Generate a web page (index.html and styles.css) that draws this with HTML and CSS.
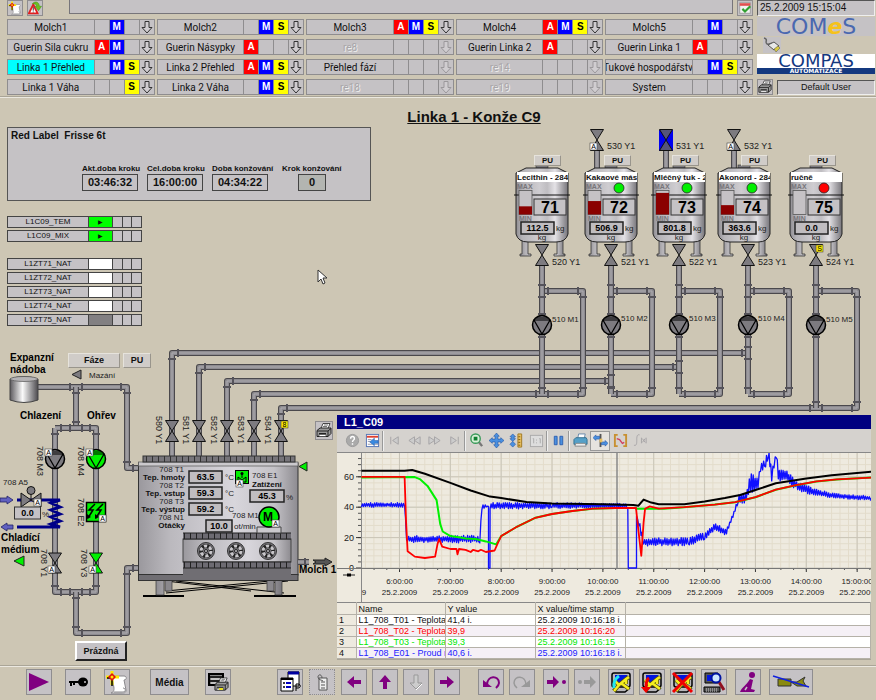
FILE: index.html
```html
<!DOCTYPE html>
<html lang="cs">

<head>
    <meta charset="UTF-8">
    <meta name="viewport" content="width=device-width, initial-scale=1.0">
    <title>Linka 1 - Konže C9</title>
    <link rel="stylesheet" href="styles.css">
</head>

<body>
    <svg class="defs" aria-hidden="true">
        <defs>
            <linearGradient id="steel">
                <stop offset="0" stop-color="#8f8d92" />
                <stop offset="0.12" stop-color="#b5b3b7" />
                <stop offset="0.45" stop-color="#cfcdd1" />
                <stop offset="0.6" stop-color="#bfbdc1" />
                <stop offset="0.75" stop-color="#e4e2e6" />
                <stop offset="1" stop-color="#77757a" />
            </linearGradient>
            <linearGradient id="drum">
                <stop offset="0" stop-color="#5c5a5e" />
                <stop offset="0.45" stop-color="#fafafa" />
                <stop offset="1" stop-color="#4c4a4e" />
            </linearGradient>
            <linearGradient id="vessel">
                <stop offset="0" stop-color="#9a989d" />
                <stop offset="0.2" stop-color="#bbb9be" />
                <stop offset="0.6" stop-color="#d8d6dc" />
                <stop offset="0.85" stop-color="#c4c2c7" />
                <stop offset="1" stop-color="#8d8b90" />
            </linearGradient>
        </defs>
        <symbol id="i-down" viewBox="0 0 14 14">
            <path d="M5 1.500h4v6h3L7 13 2 7.500h3z" fill="#d0cdd0" stroke="currentColor" />
        </symbol>
        <symbol id="i-print" viewBox="0 0 16 16">
            <path d="M5 6l2-5h7l-2 5z" fill="#fff" stroke="#222" stroke-width=".8" />
            <path d="M1 8l3-2.500h11V11l-3 3H1z" fill="#9a9a9a" stroke="#222" />
            <path d="M1 8.500h11V14M12 8.500L15 6M3 11h7" fill="none" stroke="#222" />
            <path d="M3 12h7v2H3z" fill="#fff" stroke="#222" stroke-width=".6" />
            <path d="M8 2.500h4M7 4h4" stroke="#777" />
        </symbol>
        <symbol id="i-new" viewBox="0 0 24 24">
            <path d="M7 6h12c3 0 3 4 0 4l2 10c0 3-2 3-4 3H6c3-1 3-3 3-5z" fill="#fff" stroke="#8a888c" />
            <path d="M9 22h9c3 0 3-4 0-4" fill="none" stroke="#8a888c" />
            <path d="M7 1v14M1 7h13" stroke="#ffea00" stroke-width="3" />
            <path d="M7 9v7M2 8h4" stroke="#000" stroke-width="1.500" />
            <path d="M7 3l4 4-4 4-4-4z" fill="#e01010" />
            <circle cx="7" cy="7" r="1.500" fill="#ffea00" />
        </symbol>
        <symbol id="i-screen" viewBox="0 0 24 24">
            <rect x="3" y="3" width="18" height="14" rx="2" fill="#b9b7bb" stroke="#000" stroke-width="1.500" />
            <rect x="6" y="5" width="12" height="8" fill="#0014e0" />
            <path d="M4 19l3 3h9l5-4" fill="#b9b7bb" stroke="#000" stroke-width="1.500" />
            <path d="M5 10l5 5-5 6M10 15l7-6 3-2M12 13l8 6M17 9v5" fill="none" stroke="#55500a" stroke-width="4" />
            <path d="M5 10l5 5-5 6M10 15l7-6 3-2M12 13l8 6M17 9v5" fill="none" stroke="#f5ee20" stroke-width="2.500" />
        </symbol>
    </svg>

    <header class="topbar">
        <div class="topbar-main">
            <div class="message-row">
                <button class="mini" aria-label="Nový"><svg><use href="#i-new" /></svg></button>
                <button class="mini" aria-label="Alarmy">
                    <svg viewBox="0 0 16 16">
                        <path d="M6 4l5 10H1z" fill="#fff" stroke="#e02020" stroke-width="2" />
                        <path d="M6 7v4M6 12v1" stroke="#222" />
                        <path d="M5 3c4-4 8-1 8 3h2.500L12 11 8 6h2c0-2-2-3-5-3z" fill="#6cc020" stroke="#3a8a10" stroke-width=".5" />
                    </svg>
                </button>
                <div class="message"></div>
                <button class="mini" aria-label="Kvitovat">
                    <svg viewBox="0 0 16 16">
                        <rect x="2" y="2" width="12" height="12" fill="#f2f2f2" stroke="#999" />
                        <path d="M2 4h12" stroke="#e05050" stroke-width="3" />
                        <path d="M5 9l3 3 6-6" fill="none" stroke="#30a030" stroke-width="2.500" />
                    </svg>
                </button>
            </div>
            <nav class="screens" id="screens"></nav>
        </div>

        <div class="brand">
            <div class="clock">25.2.2009 15:15:04</div>
            <div class="logo-comes">COM<em>e</em>S</div>
            <svg class="plug" viewBox="0 0 18 16">
                <path d="M1 1c5 1 0 5 3 6s4-2 6 0" fill="none" stroke="#666" stroke-width="1.500" />
                <path d="M5 8l6-3 5 4-5 4z" fill="#e8e8e8" stroke="#555" />
                <path d="M11 12l4-3 2 2-4 4z" fill="#d8c840" stroke="#555" stroke-width=".5" />
            </svg>
            <div class="logo-compas">
                <div class="logo-name">COMPAS</div>
                <div class="logo-sub">AUTOMATIZACE</div>
            </div>
            <div class="user-row">
                <button class="mini" aria-label="Tisk"><svg><use href="#i-print" /></svg></button>
                <div class="user">Default User</div>
            </div>
        </div>
    </header>

    <main class="process">
        <svg class="diagram" id="diagram" viewBox="0 98 876 567" width="876" height="567"></svg>

        <h1>Linka 1 - Konže C9</h1>

        <section class="recipe">
            <h2>Red Label&nbsp; Frisse 6t</h2>
            <div class="fields">
                <div class="field"><label for="stepTime">Akt.doba kroku</label><output id="stepTime">03:46:32</output></div>
                <div class="field"><label for="totalTime">Cel.doba kroku</label><output id="totalTime">16:00:00</output></div>
                <div class="field"><label for="concheTime">Doba konžování</label><output id="concheTime">04:34:22</output></div>
                <div class="field step"><label for="step">Krok konžování</label><output id="step">0</output></div>
            </div>
        </section>

        <table class="phases">
            <tbody>
                <tr><td class="phase">L1C09_TEM</td><td class="state run">▶</td><td></td><td></td><td></td></tr>
                <tr><td class="phase">L1C09_MIX</td><td class="state run">▶</td><td></td><td></td><td></td></tr>
            </tbody>
        </table>
        <table class="phases natural">
            <tbody>
                <tr><td class="phase">L1ZT71_NAT</td><td class="state idle"></td><td></td><td></td><td></td></tr>
                <tr><td class="phase">L1ZT72_NAT</td><td class="state idle"></td><td></td><td></td><td></td></tr>
                <tr><td class="phase">L1ZT73_NAT</td><td class="state idle"></td><td></td><td></td><td></td></tr>
                <tr><td class="phase">L1ZT74_NAT</td><td class="state idle"></td><td></td><td></td><td></td></tr>
                <tr><td class="phase">L1ZT75_NAT</td><td class="state off"></td><td></td><td></td><td></td></tr>
            </tbody>
        </table>

        <button class="flat phase-btn">Fáze</button>
        <button class="flat phase-pu">PU</button>
        <button class="empty-btn">Prázdná</button>
        <button class="mini print-btn" aria-label="Tisk"><svg><use href="#i-print" /></svg></button>

        <section class="trend">
            <h2>L1_C09</h2>
            <div class="trend-tools">
                <button disabled aria-label="Help"><svg viewBox="0 0 16 16"><circle cx="8" cy="8" r="6.500" fill="#aaa" stroke="#999" /><path d="M6 6c0-3 4-3 4 0 0 1.500-2 1.500-2 3.500M8 11v1.500" fill="none" stroke="#fff" stroke-width="1.500" /></svg></button>
                <button aria-label="Config"><svg viewBox="0 0 16 16"><rect x="1.500" y="1.500" width="13" height="13" fill="#fff" stroke="#5575b5" /><path d="M2 4h12" stroke="#e04030" stroke-width="2" /><path d="M3 7h4M3 9h3M3 12h5M10 12h4" stroke="#99a" /><path d="M5 9.500l5-4v2.500h4v3h-4v2.500z" fill="#3a8ae0" stroke="#1a50a0" stroke-width=".5" /></svg></button>
                <i></i>
                <button disabled aria-label="First"><svg viewBox="0 0 16 16"><path d="M4 4v8M12 4L6 8l6 4z" fill="#ccc" stroke="#a5a3a5" /></svg></button>
                <button disabled aria-label="Back"><svg viewBox="0 0 16 16"><path d="M8 4L2 8l6 4zM14 4L8 8l6 4z" fill="#ccc" stroke="#a5a3a5" /></svg></button>
                <button disabled aria-label="Forward"><svg viewBox="0 0 16 16"><path d="M2 4l6 4-6 4zM8 4l6 4-6 4z" fill="#ccc" stroke="#a5a3a5" /></svg></button>
                <button disabled aria-label="Last"><svg viewBox="0 0 16 16"><path d="M12 4v8M4 4l6 4-6 4z" fill="#ccc" stroke="#a5a3a5" /></svg></button>
                <i></i>
                <button aria-label="Zoom"><svg viewBox="0 0 16 16"><path d="M10 9l4 5" stroke="#777" stroke-width="2.500" /><circle cx="7" cy="6" r="5" fill="#d8f0d8" stroke="#3a9a5a" stroke-width="1.500" /><path d="M5 4h4v4H5z" fill="#108030" /></svg></button>
                <button aria-label="Move"><svg viewBox="0 0 16 16"><path d="M8 0l3 3.500H9.500v3h3V5L16 8l-3.500 3V9.500h-3v3H11L8 16l-3-3.500h1.500v-3h-3V11L0 8l3.500-3v1.500h3v-3H5z" fill="#4a90e0" stroke="#2050a0" stroke-width=".6" /></svg></button>
                <button aria-label="Scale"><svg viewBox="0 0 16 16"><path d="M4 1l3 3H5.500v2H7L4 9 1 6h1.500V4H1zM4 9l3 3-3 3-3-3z" fill="#4a90e0" stroke="#2050a0" stroke-width=".6" /><path d="M9.500 1h4v14h-4z" fill="#e8c060" stroke="#a07820" /><path d="M10 4h2M10 7h2M10 10h2M10 13h2" stroke="#805a10" /></svg></button>
                <button disabled aria-label="One to one"><svg viewBox="0 0 16 16"><rect x="1.500" y="2.500" width="13" height="12" fill="#ddd" stroke="#aaa" /><path d="M4 6h1v5M11 6h1v5M8 7v1M8 10v1" fill="none" stroke="#aaa" /></svg></button>
                <i></i>
                <button aria-label="Pause"><svg viewBox="0 0 16 16"><path d="M3.500 3.500h3v9h-3zM9.500 3.500h3v9h-3z" fill="#4a90e0" stroke="#2f60b0" /></svg></button>
                <i></i>
                <button aria-label="Print"><svg viewBox="0 0 16 16"><path d="M5 6l1-5h7l-1 5z" fill="#fff" stroke="#68a" /><path d="M1 7l2-2h11l1 2v5H1z" fill="#55a0c8" stroke="#357090" /><path d="M3 11h10l1 3H2z" fill="#eee" stroke="#888" /></svg></button>
                <button class="pressed" aria-label="Ruler"><svg viewBox="0 0 16 16"><path d="M8 1v14" stroke="#555" stroke-width="2" /><path d="M0 5l3-3v1.500h4v3H3V8z" fill="#4a90e0" stroke="#2050a0" stroke-width=".6" /><path d="M16 11l-3-3v1.500H9v3h4V14z" fill="#4a90e0" stroke="#2050a0" stroke-width=".6" /><path d="M7 6h3v4H7z" fill="#e8c060" /></svg></button>
                <button aria-label="Range"><svg viewBox="0 0 16 16"><path d="M5 2H2v12h3M11 2h3v12h-3" fill="none" stroke="#c89030" stroke-width="2" /><path d="M4 6l3 1 3 4 2-1" fill="none" stroke="#d04060" stroke-width="1.500" /></svg></button>
                <button disabled aria-label="Function"><svg viewBox="0 0 16 16"><path d="M7 2c-3-1-3 3-3 6s0 6-3 5M9 5v6M14 5v6M10 6l3 4M13 6l-3 4" fill="none" stroke="#a5a3a5" /></svg></button>
            </div>
            <svg class="chart" id="chart" viewBox="337 453 534 149"></svg>
            <table class="trend-values">
                <thead>
                    <tr><th class="num"></th><th class="name">Name</th><th class="val">Y value</th><th class="stamp">X value/time stamp</th><th></th></tr>
                </thead>
                <tbody>
                    <tr><td>1</td><td>L1_708_T01 - Teplota</td><td>41,4 i.</td><td>25.2.2009 10:16:18 i.</td><td></td></tr>
                    <tr class="red"><td>2</td><td>L1_708_T02 - Teplota</td><td>39,9</td><td>25.2.2009 10:16:20</td><td></td></tr>
                    <tr class="green"><td>3</td><td>L1_708_T03 - Teplota</td><td>39,3</td><td>25.2.2009 10:16:15</td><td></td></tr>
                    <tr class="blue"><td>4</td><td>L1_708_E01 - Proud m</td><td>40,6 i.</td><td>25.2.2009 10:16:18 i.</td><td></td></tr>
                </tbody>
            </table>
        </section>
    </main>

    <footer class="toolbar">
        <div class="group wide">
            <button aria-label="Start"><svg viewBox="0 0 24 24"><path d="M2 3l20 9L2 21z" fill="#800080" /></svg></button>
            <button aria-label="Přihlášení"><svg viewBox="0 0 24 24"><path d="M3 12h11M5 12v4M8 12v3" stroke="#000" stroke-width="2" /><ellipse cx="17" cy="12" rx="5" ry="4.500" /><circle cx="19" cy="12" r="1" fill="#c5c2c5" /></svg></button>
            <button aria-label="Nový"><svg><use href="#i-new" /></svg></button>
        </div>
        <div class="group">
            <button class="media">Média</button>
        </div>
        <div class="group reports">
            <button aria-label="Tisk"><svg viewBox="0 0 24 24"><path d="M3 4h14v11H3z" fill="#888" stroke="#000" stroke-width="2" /><path d="M3 7h14M3 11h14" stroke="#000" stroke-width="1.500" /><path d="M5 9h9M5 13h5" stroke="#fff" /><use href="#i-print" x="8" y="7" width="15" height="15" /><path d="M13 18h4v2h-4z" fill="#e8e020" /></svg></button>
        </div>
        <div class="group six">
            <button aria-label="Vlastnosti"><svg viewBox="0 0 24 24"><path d="M10 2h11v14H10z" fill="#fff" stroke="#000" /><path d="M10 3h11" stroke="#0000a0" stroke-width="3" /><path d="M3 8h12v13H3z" fill="#fff" stroke="#000" /><path d="M3 9h12" stroke="#000" stroke-width="2" /><path d="M5 13h2M5 17h2" stroke="#000" stroke-width="1.500" /><path d="M8 13h5M8 17h5" stroke="#0000c0" stroke-width="2" /><path d="M18 21v-7h2c3 0 3 4 0 4h-2" fill="none" stroke="#000" /></svg></button>
            <button class="dotted" aria-label="Zámek"><svg viewBox="0 0 24 24"><path d="M9 8h8v12H9z" fill="#eee" stroke="#555" /><path d="M12 8c0-4-4-4-4-1s4 3 5 4M11 12h4M11 15h4M11 18h4" fill="none" stroke="#555" /></svg></button>
        </div>
        <div class="group arrows">
            <button aria-label="Vlevo"><svg viewBox="0 0 24 24"><path d="M5 12l7-6v4h7v4h-7v4z" fill="#800080" /></svg></button>
            <button aria-label="Nahoru"><svg viewBox="0 0 24 24"><path d="M12 5l6 7h-4v7h-4v-7H6z" fill="#800080" /></svg></button>
            <button disabled aria-label="Dolů"><svg viewBox="0 0 24 24"><path d="M10 5h4v8h4l-6 6-6-6h4z" fill="#ccc" stroke="#999" /><path d="M18 14l-6 6" stroke="#fff" /></svg></button>
            <button aria-label="Vpravo"><svg viewBox="0 0 24 24"><path d="M19 12l-7-6v4H5v4h7v4z" fill="#800080" /></svg></button>
        </div>
        <div class="group undo">
            <button aria-label="Zpět"><svg viewBox="0 0 24 24"><path d="M8 15C8 5 20 5 20 13c0 2-1 3-3 5" fill="none" stroke="#800080" stroke-width="2" /><path d="M4 10l9 7H4z" fill="#800080" /></svg></button>
            <button disabled aria-label="Znovu"><svg viewBox="0 0 24 24"><path d="M16 15C16 5 4 5 4 13c0 2 1 3 3 5" fill="none" stroke="#999" stroke-width="1.500" /><path d="M20 10l-9 7h9z" fill="#999" /></svg></button>
        </div>
        <div class="group">
            <button aria-label="Další"><svg viewBox="0 0 24 24"><path d="M15 12l-6-6v4H3v4h6v4z" fill="#800080" /><circle cx="20" cy="12" r="2" fill="#800080" /></svg></button>
            <button disabled aria-label="Předchozí"><svg viewBox="0 0 24 24"><path d="M21 12l-6-6v4H9v4h6v4z" fill="#999" /><circle cx="5" cy="12" r="2" fill="#999" /></svg></button>
        </div>
        <div class="group">
            <button aria-label="Nahrát obraz"><svg viewBox="0 0 24 24"><use href="#i-screen" /><path d="M5 18c-1-7 2-10 5-12" fill="none" stroke="#20e8f0" stroke-width="3" /></svg></button>
            <button aria-label="Uložit obraz"><svg viewBox="0 0 24 24"><use href="#i-screen" /><path d="M9 8c-3 2-3 6-3 10" fill="none" stroke="#f00000" stroke-width="3" /><path d="M1 17h10l-5 6z" fill="#f00000" /></svg></button>
            <button aria-label="Smazat obraz"><svg viewBox="0 0 24 24"><use href="#i-screen" /><path d="M2 3l19 19M21 3L2 22" stroke="#f00000" stroke-width="3" /></svg></button>
            <button aria-label="Hledat"><svg viewBox="0 0 24 24"><path d="M3 3h13v10H3zM2 17h16v5H2z" fill="#555" stroke="#000" /><path d="M5 5h9v6H5z" fill="#0014e0" /><path d="M4 19h12M4 21h12" stroke="#ccc" stroke-dasharray="1 1" /><path d="M17 12l5 8" stroke="#901020" stroke-width="3" /><circle cx="14" cy="8" r="4.500" fill="#cfe8ff" stroke="#0014a0" stroke-width="2" /></svg></button>
        </div>
        <div class="group info">
            <button aria-label="Informace"><svg viewBox="0 0 24 24"><circle cx="16" cy="5" r="3" fill="#800080" /><path d="M14 9l3 1-2 9 4 1-1 2H4c2-5 6-6 10-13z" fill="#800080" /><path d="M11 17l-2 3" stroke="#c5c2c5" stroke-width="1.500" /></svg></button>
        </div>
        <div class="group">
            <button class="horn" aria-label="Houkačka"><svg viewBox="0 0 42 24"><path d="M8 9h13v7H8z" fill="#8a8a10" stroke="#333" /><path d="M21 12h6l8-5-2 4 3 5H27z" fill="#8a8a10" stroke="#333" /><path d="M3 6l36 11" stroke="#1020e0" stroke-width="1.500" /></svg></button>
        </div>
    </footer>

    <script src="script.js"></script>
</body>

</html>
```
FILE: styles.css
```css
* {
    box-sizing: border-box;
}

body {
    margin: 0;
    min-height: 100vh;
    display: flex;
    flex-direction: column;
    background-color: #cdc6b4;
    font-family: "Liberation Sans", Arial, sans-serif;
    font-size: 10px;
    color: #111;
}

button {
    font-family: inherit;
    padding: 0;
    color: #111;
    background-color: #c5c2c5;
    border: 1px solid #8f8d8f;
}

.defs {
    position: absolute;
    width: 0;
    height: 0;
}

/* header */

.topbar {
    display: flex;
    gap: 4px;
    height: 98px;
    padding: 0 1px 0 7px;
    border-bottom: 1px solid #ebe8e0;
    box-shadow: inset 0 -1px 0 #aaa597;
}

.topbar-main {
    flex: 1;
    min-width: 0;
}

.message-row {
    display: flex;
    gap: 4px;
    height: 19px;
}

.message {
    flex: 1;
    height: 14px;
    margin-left: 22px;
    background-color: #c5c2c5;
    border: 1px solid #77757a;
    border-top: none;
}

.mini {
    width: 16px;
    height: 16px;
    display: flex;
}

.mini svg {
    width: 100%;
    height: 100%;
}

.screens {
    display: grid;
    grid-template-columns: repeat(5, 1fr);
    gap: 4px 2px;
}

.screen {
    display: flex;
    height: 16px;
    min-width: 0;
    border: 1px solid #8f8d8f;
    background-color: #c5c2c5;
}

.screen button {
    border: none;
    background: none;
}

.screen .name {
    flex: 1;
    min-width: 0;
    display: flex;
    justify-content: center;
    align-items: center;
    overflow: hidden;
    white-space: nowrap;
    font-family: Roboto, Arial, sans-serif;
    font-size: 10px;
}

.screen .name.active {
    background-color: #00ffff;
}

.screen .name:disabled {
    color: #a9a6a9;
    text-shadow: 1px 1px 0 #eee;
}

.flag {
    width: 15px;
    border-left: 1px solid #8f8d8f;
    text-align: center;
    font-weight: bold;
    font-size: 10px;
    line-height: 14px;
}

.flag.A {
    background-color: #ff0000;
    color: #fff;
}

.flag.M {
    background-color: #0000ff;
    color: #fff;
}

.flag.S {
    background-color: #ffff00;
    color: #000;
}

.screen .down {
    width: 15px;
    border-left: 1px solid #8f8d8f;
    color: #333;
}

.screen .down:disabled {
    color: #9b989b;
}

.down svg {
    display: block;
    width: 14px;
    height: 14px;
}

.brand {
    width: 118px;
    display: flex;
    flex-direction: column;
}

.clock,
.user {
    background-color: #c5c2c5;
    border: 1px solid #555;
    border-right-color: #eee;
    border-bottom-color: #eee;
}

.clock {
    height: 16px;
    padding-left: 2px;
    font-size: 10px;
    line-height: 13px;
}

.logo-comes {
    height: 19px;
    margin-top: 1px;
    background-color: #c5c2c5;
    color: #4a68b0;
    font-family: "DejaVu Sans", sans-serif;
    font-size: 22px;
    line-height: 20px;
    text-align: center;
}

.logo-comes em {
    color: #f5c21c;
    font-weight: bold;
}

.plug {
    width: 18px;
    height: 16px;
    margin: 1px 0 1px 6px;
    background-color: #c5c2c5;
}

.logo-compas {
    height: 20px;
    background-color: #fff;
    color: #14397f;
    font-family: "DejaVu Sans", sans-serif;
    text-align: center;
}

.logo-name {
    height: 14px;
    font-size: 18px;
    line-height: 14px;
}

.logo-sub {
    height: 6px;
    font-size: 6px;
    line-height: 6px;
    font-weight: bold;
    background-color: #14397f;
    color: #fff;
}

.user-row {
    display: flex;
    gap: 4px;
    margin-top: 5px;
}

.user {
    flex: 1;
    height: 15px;
    margin-top: 1px;
    font-size: 9px;
    line-height: 13px;
    text-align: center;
}

/* process picture */

.process {
    position: relative;
    flex: 1;
    min-height: 567px;
    padding: 9px 7px 0;
}

.diagram {
    position: absolute;
    left: 0;
    top: 0;
}

.diagram text {
    font-size: 9px;
    fill: #222;
}

.diagram .small {
    font-size: 8px;
}

.diagram .b {
    font-size: 8px;
    font-weight: bold;
    fill: #111;
}

.diagram .head {
    font-size: 10px;
    font-weight: bold;
    fill: #000;
}

.diagram .value {
    font-size: 9px;
    font-weight: bold;
    fill: #000;
    text-anchor: middle;
}

.diagram .tank-no {
    font-size: 16px;
    font-weight: bold;
    fill: #000;
    text-anchor: middle;
}

.diagram .limit {
    font-size: 7px;
    font-weight: bold;
    fill: #77757a;
}

.diagram .badge {
    font-size: 7px;
    text-anchor: middle;
    fill: #000;
}

.diagram .motor {
    font-size: 12px;
    font-weight: bold;
    text-anchor: middle;
    fill: #000;
}

.diagram .end {
    text-anchor: end;
}

.diagram .mid {
    text-anchor: middle;
}

.process h1 {
    position: relative;
    margin: 0;
    padding-left: 72px;
    font-size: 15px;
    line-height: 20px;
    text-align: center;
    text-decoration: underline;
}

.recipe {
    position: relative;
    width: 364px;
    height: 74px;
    padding: 3px;
    background-color: #c5c2c5;
    border: 1px solid #555;
}

.recipe h2 {
    margin: 0;
    font-size: 10px;
    line-height: 10px;
}

.fields {
    display: flex;
    gap: 5px;
    margin: 23px 0 0 71px;
}

.field {
    width: 60px;
    white-space: nowrap;
}

.field label {
    display: block;
    font-size: 8px;
    line-height: 10px;
    font-weight: bold;
}

.field output {
    display: block;
    width: 56px;
    height: 17px;
    border: 1px solid #444;
    font-size: 11px;
    line-height: 15px;
    font-weight: bold;
    text-align: center;
}

.field.step {
    margin-left: 5px;
}

.field.step output {
    width: 28px;
    margin: 0 auto;
    background-color: #b3b5b1;
}

.phases {
    position: relative;
    width: 135px;
    margin-top: 13px;
    table-layout: fixed;
    border-spacing: 0 2px;
}

.phases.natural {
    margin-top: 12px;
}

.phases td {
    height: 12px;
    padding: 0;
    background-color: #c5c2c5;
    border: 1px solid #444;
    border-left: none;
    font-size: 8px;
    line-height: 10px;
    text-align: center;
}

.phases .phase {
    width: 82px;
    border-left: 1px solid #444;
}

.phases .state {
    width: 24px;
    font-size: 6px;
}

.phases .run {
    background-color: #00ff00;
}

.phases .idle {
    background-color: #fff;
}

.phases .off {
    background-color: #828082;
}

.flat {
    position: absolute;
    width: 27px;
    height: 11px;
    background-color: #d0ccc8;
    border: 1px solid #e6e3dc;
    border-right-color: #99958c;
    border-bottom-color: #99958c;
    font-size: 8px;
    line-height: 9px;
    font-weight: bold;
}

.phase-btn,
.phase-pu {
    top: 255px;
    height: 15px;
    font-size: 9px;
}

.phase-btn {
    left: 68px;
    width: 52px;
}

.phase-pu {
    left: 123px;
    width: 28px;
}

.empty-btn {
    position: absolute;
    left: 75px;
    top: 543px;
    width: 52px;
    height: 20px;
    border: 2px solid #fff;
    border-right-color: #222;
    border-bottom-color: #222;
    font-size: 9px;
    font-weight: bold;
}

.print-btn {
    position: absolute;
    left: 315px;
    top: 323px;
    width: 18px;
    height: 19px;
}

/* trend window */

.trend {
    position: absolute;
    left: 337px;
    right: 5px;
    top: 317px;
    background-color: #eeeadf;
    border-bottom: 1px solid #aaa597;
}

.trend h2 {
    margin: 0;
    padding-left: 7px;
    height: 14px;
    background-color: #000080;
    color: #fff;
    font-size: 11px;
    line-height: 14px;
}

.trend-tools {
    display: flex;
    align-items: center;
    height: 24px;
    padding-left: 5px;
    background-color: #d5d2ce;
    border-bottom: 1px solid #888;
}

.trend-tools button {
    width: 20px;
    height: 20px;
    display: flex;
    justify-content: center;
    align-items: center;
    border: none;
    background: none;
}

.trend-tools .pressed {
    background-color: #e6e3df;
    border: 1px solid #999;
}

.trend-tools svg {
    width: 15px;
    height: 15px;
}

.trend-tools i {
    width: 2px;
    height: 20px;
    border-left: 1px solid #999;
    border-right: 1px solid #f0f0f0;
}

.chart {
    display: block;
    width: 100%;
}

.chart text {
    font-size: 8px;
    text-anchor: middle;
    fill: #222;
}

.chart .y {
    font-size: 9px;
    text-anchor: end;
}

.trend-values {
    width: 100%;
    table-layout: fixed;
    border-collapse: collapse;
    border-top: 1px solid #888;
    font-size: 9px;
    line-height: 10px;
}

.trend-values th,
.trend-values td {
    height: 12px;
    padding: 0 0 0 2px;
    overflow: hidden;
    white-space: nowrap;
    text-align: left;
    font-weight: normal;
    border: 1px solid #b5b1a8;
    border-width: 0 1px 1px 0;
}

.trend-values td {
    height: 11px;
    background-color: #fff;
}

.trend-values tr:nth-child(even) td {
    background-color: #f5f0f6;
}

.trend-values tbody td:first-child {
    background-color: #eeeadf;
    color: #111;
}

.trend-values .num {
    width: 19px;
}

.trend-values .name {
    width: 89px;
}

.trend-values .val,
.trend-values .stamp {
    width: 90px;
}

.trend-values .red {
    color: #ff0000;
}

.trend-values .green {
    color: #00e800;
}

.trend-values .blue {
    color: #2020ff;
}

/* bottom toolbar */

.toolbar {
    display: flex;
    height: 35px;
    padding: 3px 0 0 26px;
    border-top: 1px solid #aaa597;
    box-shadow: inset 0 1px 0 #ebe8e0;
}

.toolbar .group {
    display: flex;
    gap: 5px;
    margin-right: 8px;
}

.toolbar .wide {
    gap: 13px;
    margin-right: 20px;
}

.toolbar .reports {
    margin: 0 46px 0 8px;
}

.toolbar .six {
    gap: 6px;
    margin-right: 6px;
}

.toolbar .arrows {
    margin-right: 18px;
}

.toolbar button {
    width: 26px;
    height: 26px;
    display: flex;
    justify-content: center;
    align-items: center;
}

.toolbar svg {
    width: 100%;
    height: 100%;
}

.toolbar .media {
    width: 39px;
    font-size: 10px;
    font-weight: bold;
}

.toolbar .dotted {
    border-style: dotted;
}

.toolbar .horn {
    width: 44px;
}
```
FILE: script.js
```js
// screen menu: [name, flags, options]
const screens = [
    ['Molch1', ' M '], ['Molch2', ' MS'], ['Molch3', 'AMS'], ['Molch4', 'AMS'], ['Molch5', ' M '],
    ['Guerin Sila cukru', 'AM '], ['Guerin Násypky', 'A  '], ['re8', '   ', 'off'], ['Guerin Linka 2', 'A  '], ['Guerin Linka 1', 'A  '],
    ['Linka 1 Přehled', ' MS', 'active'], ['Linka 2 Přehled', 'AMS'], ['Přehled fází', '   ', 'noarrow'], ['re14', '   ', 'off'], ['Tukové hospodářství', ' MS'],
    ['Linka 1 Váha', '  S'], ['Linka 2 Váha', ' MS'], ['re18', '   ', 'off'], ['re19', '   ', 'off'], ['System', '   ']
];

document.getElementById('screens').innerHTML = screens.map(([name, flags, opt]) => `
    <div class="screen">
        <button class="name ${opt === 'active' ? 'active' : ''}" ${opt === 'off' ? 'disabled' : ''}>${name}</button>
        ${[...flags].map(f => `<span class="flag ${f.trim()}">${f.trim()}</span>`).join('')}
        <button class="down" aria-label="${name} dolů" ${opt === 'off' || opt === 'noarrow' ? 'disabled' : ''}><svg><use href="#i-down"/></svg></button>
    </div>`).join('');

// ---- process diagram ----
const GREY = '#7d7b80';
const GREEN = '#00f000';
let out = '';

function text(x, y, str, cls = '') {
    out += `<text x="${x}" y="${y}" class="${cls}">${str}</text>`;
}

function vtext(x, y, str) {
    out += `<text transform="translate(${x} ${y}) rotate(90)">${str}</text>`;
}

function pipe(...pts) {
    const p = pts.join(' ');
    out += `<g fill="none" stroke-linejoin="round">
        <polyline points="${p}" stroke="#4a484c" stroke-width="6"/>
        <polyline points="${p}" stroke="#8d8b90" stroke-width="4"/>
        <polyline points="${p}" stroke="#aeacb1" stroke-width="1"/></g>`;
}

// flange across a vertical (v) or horizontal (h) pipe
function flange(dir, x, y) {
    out += dir === 'v'
        ? `<rect x="${x - 4}" y="${y - 1}" width="8" height="2" fill="#55535a"/>`
        : `<rect x="${x - 1}" y="${y - 4}" width="2" height="8" fill="#55535a"/>`;
}

function valve(x, y, color = GREY, h = 10.5) {
    out += `<path d="M${x - 6.5} ${y - h}h13L${x - 6.5} ${y + h}h13z" fill="${color}" stroke="#111" stroke-linejoin="round"/>`;
}

function badge(x, y, letter = 'A', color = '#fff') {
    out += `<rect x="${x}" y="${y}" width="7" height="7" fill="${color}" stroke="#444" stroke-width=".6"/>`;
    text(x + 3.5, y + 6, letter, 'badge');
}

function pump(x, y, color = GREY) {
    out += `<circle cx="${x}" cy="${y}" r="9.500" fill="${color}" stroke="#000" stroke-width="1.500"/>
        <path d="M${x - 8} ${y - 5}h16L${x} ${y + 9}zM${x - 6} ${y - 7}h12" fill="none" stroke="#000" stroke-width="1.200"/>`;
}

function valueBox(x, y, w, str) {
    out += `<rect x="${x}" y="${y}" width="${w}" height="12" fill="#c0bdc0" stroke="#222" stroke-width="1.500"/>`;
    text(x + w / 2, y + 9, str, 'value');
}

const tanks = [
    { x: 516, cx: 542, no: 71, name: 'Lecithin - 28400', level: 0.34, kg: '112.5', pu: 534 },
    { x: 585, cx: 611, no: 72, name: 'Kakaové máslo', level: 0.56, kg: '506.9', pu: 604, lamp: GREEN, top: 597 },
    { x: 653, cx: 679, no: 73, name: 'Mléčný tuk - 28', level: 0.9, kg: '801.8', pu: 672, lamp: GREEN, top: 666 },
    { x: 718, cx: 748, no: 74, name: 'Akonord - 2840', level: 0.39, kg: '363.6', pu: 741, lamp: GREEN, top: 734 },
    { x: 790, cx: 816, no: 75, name: 'ručně', level: 0, kg: '0.0', pu: 809, lamp: '#ff0000' }
];

// feed lines to the conche, from the outer one to the inner one
pipe(172, 460, 172, 353, 748, 353);
pipe(199, 460, 199, 367, 679, 367);
pipe(227, 460, 227, 381, 611, 381);
pipe(254, 460, 254, 394, 583, 394);
pipe(281, 460, 281, 408, 858, 408);
[[172, 353], [199, 367], [227, 381], [254, 394], [281, 408]].forEach(([x, y], i) => {
    flange('h', x + 6, y);
    flange('v', x, y + 6);
    valve(x, 431);
    vtext(x - 16, 416, `58${i} Y1`);
});
badge(281, 421, '8', '#ffee00');

tanks.forEach((t, i) => {
    const bottom = i === 4 ? 408 : 394;
    const loop = t.cx + 41;
    pipe(t.cx, 291, loop, 291, loop, bottom, t.cx, bottom);
    pipe(t.cx, 264, t.cx, bottom);
    [285, 297, 314, 337].forEach(y => flange('v', t.cx, y));
    flange('v', t.cx, bottom - 6);
    flange('v', loop, 297);
    flange('v', loop, bottom - 6);
    flange('h', t.cx + 6, 291);
    flange('h', loop - 5, 291);
    flange('h', loop - 5, bottom);
    flange('h', t.cx + 6, bottom);
    if (i === 0 || i === 4) flange('h', t.cx - 6, bottom);
    pump(t.cx, 325);
    valve(t.cx, 255);
    text(t.cx + 10, 265, `52${i} Y1`);
    text(t.cx + 10, i === 0 || i === 4 ? 322 : 321, `510 M${i + 1}`, 'small');
});
[[748, 353], [679, 367], [611, 381]].forEach(([x, y]) => {
    flange('h', x - 6, y);
    flange('v', x, y - 6);
    flange('v', x, y + 6);
});

tanks.forEach((t, i) => {
    const x = t.x;
    if (t.top) {
        pipe(t.top, 150, t.top, 168);
        if (i === 2) out += `<rect x="${t.top - 7}" y="130" width="14" height="21" fill="#0000f0"/>`;
        valve(t.top, 140, i === 2 ? '#55537a' : GREY);
        if (i !== 2) badge(t.top - 7, 143);
        text(t.top + 10, 149, `53${i - 1} Y1`);
    }
    out += `<path d="M${x + 6} 240h6v14h3v2h-11v-2h2zM${x + 41} 240h6v14h2v2h-11v-2h3z" fill="url(#steel)" stroke="#333" stroke-width=".8"/>
        <rect x="${x + 20}" y="165" width="12" height="3" fill="${GREY}" stroke="#333" stroke-width=".6"/>
        <path d="M${x} 173l10-5h32l10 5v61q-2 8-12 8h-28q-10 0-12-8z" fill="url(#steel)" stroke="#222"/>
        <path d="M${x - 2} 195h56" stroke="#111"/>
        <rect x="${x + 1}" y="172" width="51" height="10" fill="#fff"/>
        <svg x="${x + 1}" y="172" width="51" height="10"><text x="0" y="8" class="b">${t.name}</text></svg>`;
    text(x + 1, 189, 'MAX', 'limit');
    text(x + 3, 221, 'MIN', 'limit');
    const h = 24 * t.level;
    out += `<rect x="${x + 3}" y="190.500" width="13" height="24" fill="#c5c2c5" stroke="#555" stroke-width=".8"/>
        <rect x="${x + 3}" y="${214.5 - h}" width="13" height="${h}" fill="#8a0000"/>
        <rect x="${x + 18}" y="199" width="32" height="16" fill="#c5c2c5" stroke="#333"/>`;
    text(x + 34, 213, t.no, 'tank-no');
    if (t.lamp) out += `<circle cx="${x + 34}" cy="188" r="5" fill="${t.lamp}" stroke="#222" stroke-width=".8"/>`;
    valueBox(x + 5, 222, 33, t.kg);
    text(x + 40, 231, 'kg', 'small');
    text(x + 26, 240, 'kg', 'small mid');
});
badge(816, 245, 'S', '#ffee00');

// heating and cooling loop
pipe(38, 387, 127, 387, 127, 468, 139, 468);
pipe(76, 387, 76, 428);
pipe(55, 428, 96, 428, 96, 592, 55, 592, 55, 428);
pipe(76, 592, 76, 633, 127, 633, 127, 568, 139, 568);
[[70, 387], [82, 387], [121, 387], [133, 468], [61, 428], [70, 428], [82, 428], [90, 428],
 [61, 592], [70, 592], [82, 592], [90, 592], [82, 633], [121, 633], [133, 568]].forEach(p => flange('h', ...p));
[[76, 393], [76, 422], [127, 393], [127, 462], [55, 434], [96, 434], [55, 586], [96, 586],
 [76, 598], [76, 627], [127, 627], [127, 574]].forEach(p => flange('v', ...p));

out += `<path d="M10 379q14-5 28 0v21q-14 5-28 0z" fill="url(#drum)" stroke="#444"/>
    <ellipse cx="24" cy="379" rx="13.500" ry="2.500" fill="#b5b3b5" stroke="#555" stroke-width=".7"/>
    <path d="M81 370v9l-9-4.500z" fill="${GREY}" stroke="#222"/>
    <path d="M24 556v10l-10-5z" fill="${GREEN}" stroke="#222"/>
    <path d="M17 500h43l-9 3 9 4-9 3 9 4-9 3 9 4-9 3 9 3H17" fill="none" stroke="#000088" stroke-width="3"/>
    <path d="M0 498h7v-2l6 4-6 4v-2H0zM13 525H7v-2l-6 4 6 4v-2h6z" fill="#6060c0" stroke="#222266" stroke-width=".8"/>
    <path d="M31 500V492" stroke="#111"/><circle cx="31" cy="490.500" r="4" fill="${GREY}" stroke="#111"/>
    <path d="M21 493v14l20-14v14z" fill="${GREY}" stroke="#111"/>
    <rect x="86.500" y="502.500" width="19" height="19" fill="${GREEN}" stroke="#000" stroke-width="1.500"/>
    <path d="M95 504l-6 6h4l-5 8M103 504l-6 6h4l-5 8" fill="none" stroke="#000" stroke-width="1.500"/>
    <path d="M87 519v-5l4 3zM95 519v-5l4 3z"/>
    <rect x="14.500" y="507" width="26" height="12" fill="#c5c2c5" stroke="#333"/>`;
text(27.5, 516, '0.0', 'value');
text(42, 517, '%', 'small');
badge(34, 499);
badge(99, 515);
pump(55, 459);
pump(96, 459, GREEN);
badge(45, 449);
badge(86, 449);
valve(55, 563, GREY, 10);
valve(96, 563, GREEN, 10);
badge(48, 566);
badge(89, 566);

text(10, 361, 'Expanzní', 'head');
text(10, 373, 'nádoba', 'head');
text(20, 419, 'Chlazení', 'head');
text(87, 419, 'Ohřev', 'head');
text(89, 378, 'Mazání', 'small');
text(3, 485, '708 A5', 'small');
text(1, 541, 'Chladící', 'head');
text(1, 553, 'médium', 'head');
vtext(37, 446, '708 M3');
vtext(78, 446, '708 M4');
vtext(78, 498, '708 E2');
vtext(41, 549, '708 Y1');
vtext(81, 549, '708 Y3');

// conche
out += `<g stroke="#000"><path d="M166 581l85 10M288 581l-122 12M176 581l108 12M270 581l-104 10"/>
    <path d="M143 596h41M254 596h42" stroke-width="2"/></g>
    <path d="M165 580h7v11h-7zM267 580h7v11h-7z" fill="#8a888c" stroke="#333" stroke-width=".7"/>
    <path d="M156 580h8v15h-8zM275 580h7v15h-7z" fill="url(#steel)" stroke="#333" stroke-width=".7"/>
    <rect x="138.500" y="463" width="159.500" height="112" fill="url(#vessel)" stroke="#333"/>
    <rect x="138.500" y="462" width="159.500" height="4" fill="#cbc9cd" stroke="#555" stroke-width=".7"/>
    <rect x="143" y="456" width="152" height="6" fill="#77757a" stroke="#333"/>
    <path d="M146 459h148" stroke="#333" stroke-width="6" stroke-dasharray="1 5"/>
    <rect x="138.500" y="574.500" width="159.500" height="6" fill="#706e73" stroke="#333"/>
    <rect x="183" y="533" width="108" height="42" fill="#706e73"/>
    <rect x="183" y="539" width="108" height="23" fill="url(#vessel)" stroke="#444"/>
    <path d="M183 536h108M183 565h108" stroke="#6d6b72" stroke-width="6"/>
    <path d="M184 536h107M184 565h107" stroke="#222" stroke-width="6" stroke-dasharray="1 5"/>
    <path d="M183 533h108M183 539h108M183 562h108M183 568h108" stroke="#222"/>
    <path d="M257 527h24v6h-24z" fill="#cbc9cd" stroke="#444"/>
    <path d="M307 462v9l-8-4.500z" fill="${GREEN}" stroke="#222"/>
    <path d="M313 560l3 2-3 2h12v2l7-4-7-4v2z" fill="#555" stroke="#222"/>`;
pipe(298, 562, 309, 562);
flange('h', 305, 562);
[206, 236, 268].forEach(x => {
    out += `<circle cx="${x}" cy="551" r="8.500" fill="#77757a" stroke="#333"/>
        <circle cx="${x}" cy="551" r="5" fill="none" stroke="#222" stroke-width="4"/>
        <circle cx="${x}" cy="551" r="5" fill="none" stroke="#c8c6ca" stroke-width="3" stroke-dasharray="3.200 2.030"/>
        <circle cx="${x}" cy="551" r="1.500" fill="#c8c6ca" stroke="#222"/>`;
});

[['708 T1', 'Tep. hmoty', 472], ['708 T2', 'Tep. vstup', 488], ['708 T3', 'Tep. výstup', 504], ['708 N1', 'Otáčky', 520]].forEach(([tag, name, y]) => {
    text(184, y, tag, 'small end');
    text(185, y + 8, name, 'b end');
});
[['63.5', 471], ['59.3', 487], ['59.2', 503]].forEach(([v, y]) => {
    valueBox(189, y, 33, v);
    text(225, y + 9, '°C', 'small');
});
text(232, 518, '708 M1', 'small');
valueBox(206, 520, 26, '10.0');
text(234, 529, 'ot/min', 'small');
text(252, 478, '708 E1', 'small');
text(252, 487, 'Zatížení', 'b');
valueBox(250, 490, 34, '45.3');
text(286, 500, '%', 'small');
out += `<rect x="235.500" y="470.500" width="13" height="13" fill="${GREEN}" stroke="#000"/>
    <path d="M242 478v-4M238 482v-5l4 3 4-3v5z" fill="none" stroke="#000"/><circle cx="242" cy="473.500" r="1.500"/>
    <circle cx="269" cy="517" r="10" fill="${GREEN}" stroke="#000" stroke-width="1.500"/>`;
text(268, 521, 'M', 'motor');
badge(236, 480);
badge(272, 520);
text(299, 573, 'Molch 1', 'head');

// mouse pointer
out += '<path d="M318 270v12l3-3 2 5 2-1-2-5h4z" fill="#fff" stroke="#333"/>';

document.getElementById('diagram').innerHTML = out;

tanks.forEach(t => {
    const btn = document.createElement('button');
    btn.className = 'flat';
    btn.textContent = 'PU';
    btn.style.left = t.pu + 'px';
    btn.style.top = '57px';
    document.querySelector('.process').appendChild(btn);
});

// ---- trend ----
const px = h => 399.5 + (h - 6) * 50.85;
const py = v => 568 - v * 1.52;

function line(pts, color, width) {
    const p = pts.map(([h, v]) => px(h).toFixed(1) + ',' + py(v).toFixed(1)).join(' ');
    return `<polyline points="${p}" fill="none" stroke="${color}" stroke-width="${width}" stroke-linejoin="round"/>`;
}

const black = [[5.25, 64], [6.1, 64], [6.25, 64.5], [6.5, 62], [7, 56], [7.4, 51], [7.78, 47], [8, 46], [8.5, 43.5], [9, 42.5], [10, 42],
    [10.6, 41.5], [10.7, 41], [10.75, 43], [10.8, 45], [10.95, 43], [11.1, 42], [11.6, 42], [12, 43.7], [12.4, 46], [12.7, 48], [13, 51.3],
    [13.4, 55.7], [14, 58.8], [14.5, 61], [15.28, 63.4]];
const rise = [[8, 21], [8.3, 27], [8.67, 33], [9, 35.5], [9.4, 37.5], [9.8, 39], [10.25, 39.5], [10.65, 39.5]];
const finish = [[11.6, 40], [12.2, 41.7], [12.6, 43.3], [13, 46.6], [13.4, 51.5], [13.8, 54.5], [14.2, 57], [14.6, 58.3], [15.28, 59.5]];
const red = [[5.25, 60], [6.1, 60], [6.13, 30], [6.16, 11], [6.3, 7.5], [6.5, 6.6], [6.7, 7.5], [6.75, 16], [6.78, 19], [6.84, 14], [7, 12.5],
    [7.12, 12.5], [7.14, 9], [7.17, 12.5], [7.3, 12], [7.4, 10.5], [7.45, 12], [7.55, 11], [7.6, 12], [7.7, 10.5], [7.87, 11.5], [7.93, 16],
    ...rise, [10.68, 30], [10.755, 8], [10.8, 30], [10.83, 39], [10.92, 40.5], [11.1, 39], ...finish];
const green = [[5.25, 59.6], [6.3, 59.8], [6.4, 58.5], [6.55, 54], [6.73, 44.7], [6.8, 29], [6.85, 24], [7, 21], [7.2, 20], [7.3, 19.5],
    [7.5, 19], [7.7, 17.5], [7.9, 15.5], ...rise, [10.65, 39], [11.2, 39], ...finish];

// motor load: [hour, value, ripple]
const load = [[5.25, 41.5, 1.5], [6.1, 41.5, 1.5], [6.14, 20, 2], [6.16, 19, 2.4], [7.58, 19, 2.6], [7.62, 40.5, 2], [7.75, 40.5, 0], [7.751, 0, 0],
    [7.78, 0, 0], [7.781, 41, 2.2], [9, 41, 2], [10.49, 41, 1.4], [10.5, 0, 0], [10.66, 0, 0], [10.661, 34, 0], [10.75, 24, 4], [10.8, 17, 2.6], [11.7, 17.5, 2.8], [12, 21, 2.4],
    [12.2, 27, 2.6], [12.43, 23.5, 2.2], [12.6, 38, 1], [12.66, 45, 3], [12.82, 47, 4], [12.9, 55, 7], [13.05, 56, 6], [13.1, 66, 3],
    [13.2, 69, 3], [13.25, 76, 5], [13.32, 61, 4], [13.41, 75, 3], [13.45, 61, 4], [13.6, 61, 4], [13.75, 56, 3.5], [13.95, 52, 3],
    [14.3, 49, 2], [14.7, 47, 1.5], [15.28, 46, 1.5]];
const blue = [];
for (let i = 0; i < load.length - 1; i++) {
    const [h0, v0, a0] = load[i];
    const [h1, v1, a1] = load[i + 1];
    const n = Math.max(1, Math.round((h1 - h0) / 0.02));
    for (let k = 0; k < n; k++) {
        const f = k / n;
        const r = Math.sin((blue.length + 1) * 12.9898) * 43758.5453;
        const ripple = (0.4 + 0.6 * (r - Math.floor(r))) * (k % 2 ? 1 : -1);
        blue.push([h0 + (h1 - h0) * f, v0 + (v1 - v0) * f + ripple * (a0 + (a1 - a0) * f)]);
    }
}
blue.push([15.28, 46]);

let c = '<clipPath id="plot"><rect x="361" y="453" width="510" height="116"/></clipPath>';
for (let h = 5.33; h < 15.3; h += 1 / 6) {
    c += `<path d="M${px(h).toFixed(1)} 453v115" stroke="#e3dccb"/>`;
}
for (let v = 4; v < 76; v += 4) {
    c += `<path d="M361 ${py(v)}h510" stroke="#e3dccb"/><path d="M358 ${py(v)}h3" stroke="#555"/>`;
}
for (let v = 0; v <= 60; v += 20) {
    c += `<path d="M361 ${py(v)}h510" stroke="#c9c5b8"/><path d="M356 ${py(v)}h5" stroke="#333"/>`;
    c += `<text class="y" x="354" y="${py(v) + 3}">${v}</text>`;
}
for (let h = 6; h <= 15; h++) {
    c += `<path d="M${px(h)} 453v115" stroke="#c9c5b8"/><path d="M${px(h)} 568v4" stroke="#333"/>`;
    c += `<text x="${px(h)}" y="584">${h}:00:00</text><text x="${px(h)}" y="595">25.2.2009</text>`;
}
c += '<text x="364" y="595">9</text>';
for (let h = 5.5; h < 15.3; h += 0.25) {
    c += `<path d="M${px(h)} 568v2" stroke="#555"/>`;
}
c += '<path d="M361.500 453v149" stroke="#888"/><path d="M337 568.500h534" stroke="#777"/><path d="M343 575h12" stroke="#222"/><path d="M347 573.500h4v3h-4z"/>';
c += '<path d="M617 453v115" stroke="#888" stroke-width="1.500"/>';
c += '<g clip-path="url(#plot)">' + line(blue, '#1010ff', 1.3) + line(green, '#00f000', 2) + line(red, '#ff0000', 1.8) + line(black, '#000', 2) + '</g>';
document.getElementById('chart').innerHTML = c;
```
